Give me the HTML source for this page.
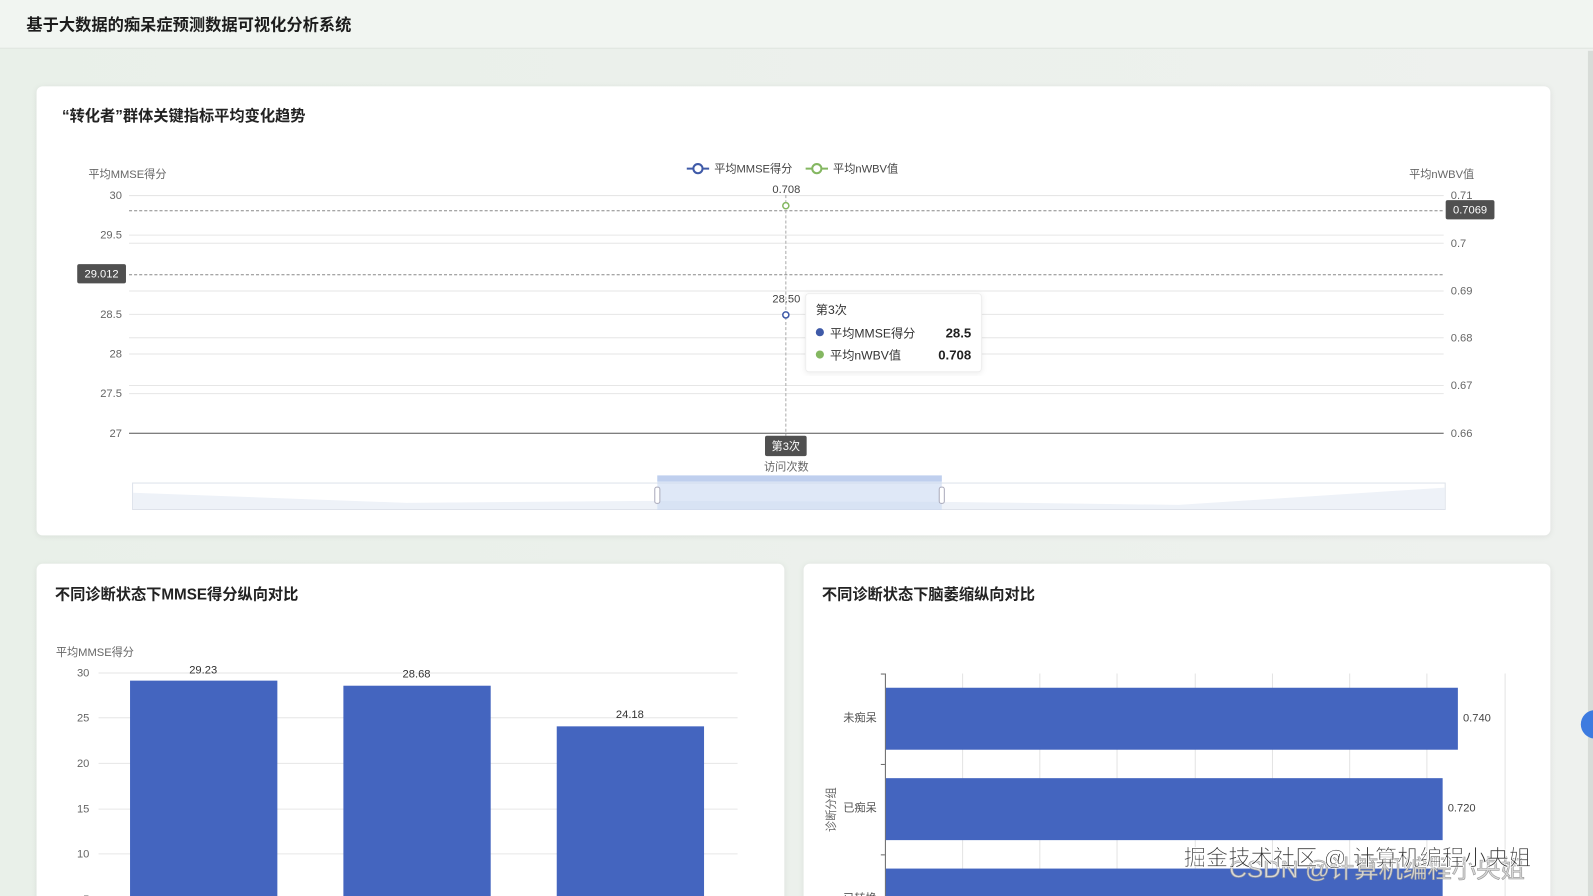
<!DOCTYPE html>
<html><head><meta charset="utf-8"><style>
html,body{margin:0;padding:0;width:1593px;height:896px;overflow:hidden;background:#eef1ee;font-family:"Liberation Sans","Noto Sans CJK SC",sans-serif}
svg{position:absolute;left:0;top:0}
</style></head><body>
<svg width="1593" height="896" viewBox="0 0 1568 882" preserveAspectRatio="none" font-family="Liberation Sans, Noto Sans CJK SC, sans-serif">
<defs>
<linearGradient id="bg" x1="0" y1="0" x2="1" y2="0"><stop offset="0" stop-color="#e9f0e9"/><stop offset="1" stop-color="#eef1ee"/></linearGradient>
<filter id="sh" x="-5%" y="-5%" width="110%" height="110%"><feDropShadow dx="0" dy="1" stdDeviation="3" flood-color="#000" flood-opacity="0.08"/></filter>
</defs>
<rect width="1568" height="882" fill="url(#bg)"/>
<rect width="1568" height="47" fill="#f1f5f1"/>
<line x1="0" y1="47.5" x2="1568" y2="47.5" stroke="#dfe5df"/>
<text x="26" y="30" font-size="16" font-weight="bold" fill="#1c1c1c">基于大数据的痴呆症预测数据可视化分析系统</text>
<rect x="1563" y="50" width="5" height="846" fill="#d8dcd8"/>

<!-- top card -->
<rect x="36" y="85" width="1490" height="442" rx="6" fill="#fff" filter="url(#sh)"/>
<text x="61" y="119" font-size="15" font-weight="bold" fill="#222">“转化者”群体关键指标平均变化趋势</text>
<g font-size="11" fill="#666">
<text x="87" y="175">平均MMSE得分</text>
<text x="1387" y="175">平均nWBV值</text>
<g text-anchor="end"><text x="120" y="196">30</text><text x="120" y="235">29.5</text><text x="120" y="313">28.5</text><text x="120" y="352">28</text><text x="120" y="391">27.5</text><text x="120" y="430">27</text></g>
<text x="1428" y="196">0.71</text><text x="1428" y="243">0.7</text><text x="1428" y="290">0.69</text><text x="1428" y="336">0.68</text><text x="1428" y="383">0.67</text><text x="1428" y="430">0.66</text>
</g>
<g stroke="#e6e6e6">
<line x1="127" y1="192.5" x2="1421" y2="192.5"/><line x1="127" y1="231.5" x2="1421" y2="231.5"/><line x1="127" y1="239.5" x2="1421" y2="239.5"/><line x1="127" y1="286.5" x2="1421" y2="286.5"/><line x1="127" y1="309.5" x2="1421" y2="309.5"/><line x1="127" y1="332.5" x2="1421" y2="332.5"/><line x1="127" y1="348.5" x2="1421" y2="348.5"/><line x1="127" y1="379.5" x2="1421" y2="379.5"/><line x1="127" y1="387.5" x2="1421" y2="387.5"/>
</g>
<line x1="127" y1="426.5" x2="1421" y2="426.5" stroke="#555"/>
<g stroke="#888" stroke-dasharray="3,2"><line x1="127" y1="207.5" x2="1421" y2="207.5"/><line x1="127" y1="270.5" x2="1421" y2="270.5"/><line x1="773.5" y1="192" x2="773.5" y2="430" stroke="#aaa"/></g>
<rect x="76" y="260" width="48" height="19" rx="2" fill="#505050"/><text x="100" y="273" font-size="11" fill="#fff" text-anchor="middle">29.012</text>
<rect x="1423" y="197" width="48" height="19" rx="2" fill="#505050"/><text x="1447" y="210" font-size="11" fill="#fff" text-anchor="middle">0.7069</text>
<line x1="676" y1="166" x2="698" y2="166" stroke="#3f5aa8" stroke-width="2"/><circle cx="687" cy="166" r="4.5" fill="#fff" stroke="#3f5aa8" stroke-width="2"/>
<text x="703" y="170" font-size="11" fill="#444">平均MMSE得分</text>
<line x1="793" y1="166" x2="815" y2="166" stroke="#84b761" stroke-width="2"/><circle cx="804" cy="166" r="4.5" fill="#fff" stroke="#84b761" stroke-width="2"/>
<text x="820" y="170" font-size="11" fill="#444">平均nWBV值</text>
<text x="774" y="190" font-size="11" fill="#444" text-anchor="middle">0.708</text>
<circle cx="773.5" cy="202.5" r="3" fill="#fff" stroke="#84b761" stroke-width="1.5"/>
<text x="774" y="298" font-size="11" fill="#444" text-anchor="middle">28.50</text>
<circle cx="773.5" cy="310" r="3" fill="#fff" stroke="#3f5aa8" stroke-width="1.5"/>
<rect x="793" y="289" width="173" height="77" rx="3" fill="#fff" stroke="#eee" filter="url(#sh)"/>
<text x="803" y="309" font-size="12" fill="#333">第3次</text>
<circle cx="807" cy="327" r="4" fill="#3f5aa8"/><text x="817" y="332" font-size="12" fill="#333">平均MMSE得分</text><text x="956" y="332" font-size="13" font-weight="bold" fill="#222" text-anchor="end">28.5</text>
<circle cx="807" cy="349" r="4" fill="#84b761"/><text x="817" y="354" font-size="12" fill="#333">平均nWBV值</text><text x="956" y="354" font-size="13" font-weight="bold" fill="#222" text-anchor="end">0.708</text>
<rect x="753" y="429" width="41" height="20" rx="2" fill="#505050"/><text x="773.5" y="443" font-size="11" fill="#fff" text-anchor="middle">第3次</text>
<text x="774" y="463" font-size="11" fill="#666" text-anchor="middle">访问次数</text>
<rect x="130.5" y="475.5" width="1292" height="26" fill="#fff" stroke="#dde2ea"/>
<path d="M131 485 L400 495 L647 493 L927 494 L1160 497 L1422 480 L1422 501 L131 501Z" fill="#eef2f8"/>
<rect x="647" y="468" width="280" height="34" fill="#c9d8f2" opacity="0.6"/>
<rect x="647" y="468" width="280" height="6" fill="#bfcfee"/>
<rect x="644.5" y="479.5" width="5" height="16" rx="2" fill="#fff" stroke="#aab"/>
<rect x="924.5" y="479.5" width="5" height="16" rx="2" fill="#fff" stroke="#aab"/>

<rect x="36" y="555" width="736" height="360" rx="6" fill="#fff" filter="url(#sh)"/>
<text x="54" y="590" font-size="15" font-weight="bold" fill="#222">不同诊断状态下MMSE得分纵向对比</text>
<text x="55" y="646" font-size="11" fill="#666">平均MMSE得分</text>
<g stroke="#e6e6e6"><line x1="97" y1="662.5" x2="726" y2="662.5"/><line x1="97" y1="706.5" x2="726" y2="706.5"/><line x1="97" y1="751.5" x2="726" y2="751.5"/><line x1="97" y1="796.5" x2="726" y2="796.5"/><line x1="97" y1="840.5" x2="726" y2="840.5"/><line x1="97" y1="885.5" x2="726" y2="885.5"/></g>
<g font-size="11" fill="#666" text-anchor="end"><text x="88" y="666">30</text><text x="88" y="710">25</text><text x="88" y="755">20</text><text x="88" y="800">15</text><text x="88" y="844">10</text><text x="88" y="889">5</text></g>
<g fill="#4465bf"><rect x="128" y="670" width="145" height="230"/><rect x="338" y="675" width="145" height="230"/><rect x="548" y="715" width="145" height="190"/></g>
<g font-size="11" fill="#333" text-anchor="middle"><text x="200" y="663">29.23</text><text x="410" y="667">28.68</text><text x="620" y="707">24.18</text></g>

<rect x="791" y="555" width="735" height="360" rx="6" fill="#fff" filter="url(#sh)"/>
<text x="809" y="590" font-size="15" font-weight="bold" fill="#222">不同诊断状态下脑萎缩纵向对比</text>
<g stroke="#e4e4e4"><line x1="947.5" y1="663" x2="947.5" y2="896"/><line x1="1023.5" y1="663" x2="1023.5" y2="896"/><line x1="1099.5" y1="663" x2="1099.5" y2="896"/><line x1="1176.5" y1="663" x2="1176.5" y2="896"/><line x1="1252.5" y1="663" x2="1252.5" y2="896"/><line x1="1328.5" y1="663" x2="1328.5" y2="896"/><line x1="1404.5" y1="663" x2="1404.5" y2="896"/><line x1="1481.5" y1="663" x2="1481.5" y2="896"/></g>
<line x1="871.5" y1="663" x2="871.5" y2="896" stroke="#666"/>
<g stroke="#666"><line x1="867" y1="663.5" x2="871" y2="663.5"/><line x1="867" y1="752.5" x2="871" y2="752.5"/><line x1="867" y1="841.5" x2="871" y2="841.5"/></g>
<g fill="#4465bf"><rect x="872" y="677" width="563" height="61"/><rect x="872" y="766" width="548" height="61"/><rect x="872" y="855" width="548" height="50"/></g>
<g font-size="11" fill="#444"><text x="1440" y="710">0.740</text><text x="1425" y="799">0.720</text></g>
<g font-size="11" fill="#555" text-anchor="end"><text x="863" y="710">未痴呆</text><text x="863" y="799">已痴呆</text><text x="863" y="888">已转换</text></g>
<text transform="translate(822,797) rotate(-90)" font-size="11" fill="#666" text-anchor="middle">诊断分组</text>
<circle cx="1570" cy="713" r="14" fill="#3d7be0"/>
<text x="1210" y="864" font-size="24" fill="#d8d8d8" stroke="#999" stroke-width="0.6">CSDN @计算机编程小央姐</text>
<text x="1165" y="852" font-size="22" fill="#333" stroke="#fff" stroke-width="0.8">掘金技术社区 @ 计算机编程小央姐</text>
</svg>
</body></html>
